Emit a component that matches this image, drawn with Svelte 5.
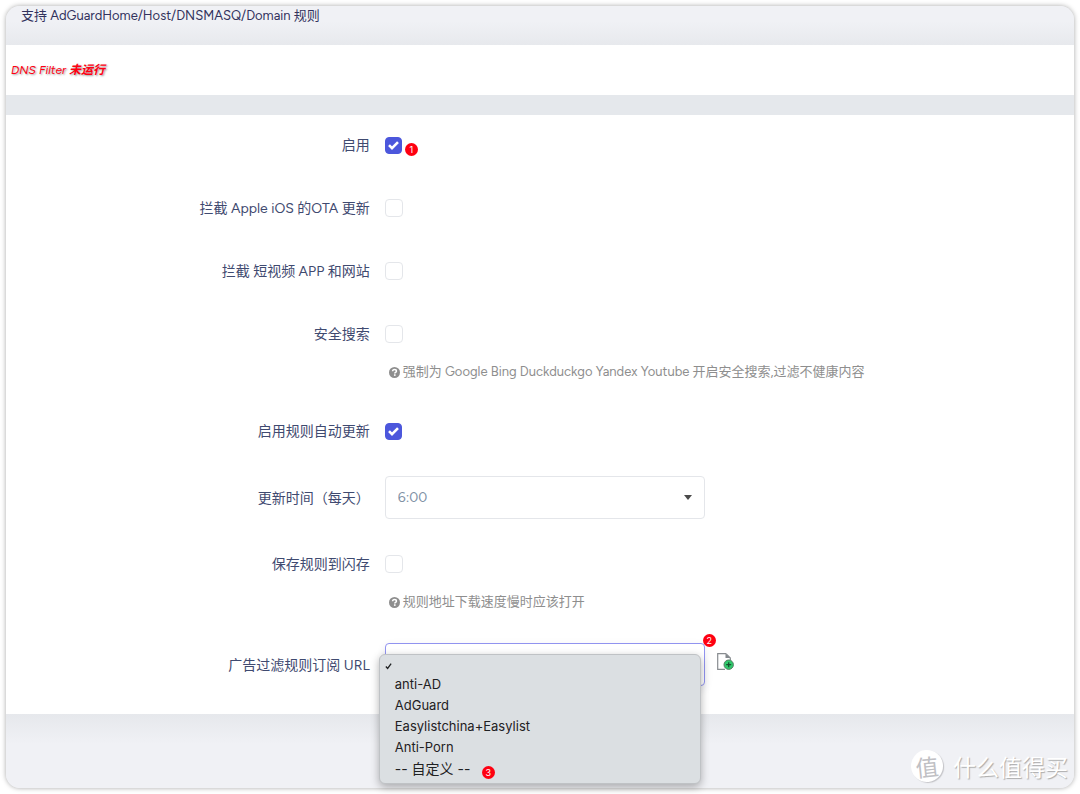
<script>
    let enabled = $state(true);
    let blockOta = $state(false);
    let blockVideo = $state(false);
    let safeSearch = $state(false);
    let autoUpdate = $state(true);
    let saveFlash = $state(false);
    let updateTime = $state("6:00");
    let ruleUrl = $state("");
    let menuOpen = $state(true);

    const hours = Array.from({ length: 24 }, (_, h) => `${h}:00`);

    const sources = ["", "anti-AD", "AdGuard", "Easylistchina+Easylist", "Anti-Porn", "-- 自定义 --"];

    function pick(source) {
        ruleUrl = source;
        menuOpen = false;
    }

    // the custom list replaces the native popup of the select
    function openMenu(e) {
        e.preventDefault();
        menuOpen = !menuOpen;
    }
</script>

{#snippet hint(text)}
    <p class="hint">
        <svg viewBox="0 0 16 16" aria-hidden="true">
            <circle cx="8" cy="8" r="8" fill="currentColor" />
            <path d="M5.2 6.300C5.300 4.500 6.500 3.600 8 3.600s2.800.9 2.800 2.400c0 1.900-2.400 1.900-2.400 3.500" fill="none" stroke="#fff" stroke-width="2.200" />
            <rect x="7.200" y="10.600" width="2.400" height="2.300" fill="#fff" />
        </svg>
        {text}
    </p>
{/snippet}

<div class="window">
    <header>支持 AdGuardHome/Host/DNSMASQ/Domain 规则</header>

    <section class="status"><em>DNS Filter <b>未运行</b></em></section>

    <form>
        <div class="row">
            <label for="enabled">启用</label>
            <div class="field">
                <input id="enabled" type="checkbox" bind:checked={enabled} />
                <span class="badge one">1</span>
            </div>
        </div>
        <div class="row">
            <label for="ota">拦截 Apple iOS 的OTA 更新</label>
            <div class="field"><input id="ota" type="checkbox" bind:checked={blockOta} /></div>
        </div>
        <div class="row">
            <label for="video">拦截 短视频 APP 和网站</label>
            <div class="field"><input id="video" type="checkbox" bind:checked={blockVideo} /></div>
        </div>
        <div class="row">
            <label for="safe">安全搜索</label>
            <div class="field"><input id="safe" type="checkbox" bind:checked={safeSearch} /></div>
            {@render hint("强制为 Google Bing Duckduckgo Yandex Youtube 开启安全搜索,过滤不健康内容")}
        </div>
        <div class="row">
            <label for="auto">启用规则自动更新</label>
            <div class="field"><input id="auto" type="checkbox" bind:checked={autoUpdate} /></div>
        </div>
        <div class="row">
            <label for="time">更新时间（每天）</label>
            <div class="field">
                <div class="select">
                    <select id="time" bind:value={updateTime}>
                        {#each hours as hour (hour)}
                            <option>{hour}</option>
                        {/each}
                    </select>
                    <span class="caret"></span>
                </div>
            </div>
        </div>
        <div class="row">
            <label for="flash">保存规则到闪存</label>
            <div class="field"><input id="flash" type="checkbox" bind:checked={saveFlash} /></div>
            {@render hint("规则地址下载速度慢时应该打开")}
        </div>
        <div class="row">
            <label for="url">广告过滤规则订阅 URL</label>
            <div class="field">
                <div class="select">
                    <select id="url" class="focused" bind:value={ruleUrl} onmousedown={openMenu}>
                        {#each sources as source (source)}
                            <option value={source}>{source}</option>
                        {/each}
                    </select>
                    <span class="badge two">2</span>
                    {#if menuOpen}
                        <div class="menu" role="listbox" aria-label="广告过滤规则订阅 URL">
                            {#each sources as source (source)}
                                <button type="button" role="option" aria-selected={source === ruleUrl} aria-label={source || "空"} onclick={() => pick(source)}>
                                    <span class="tick">
                                        {#if source === ruleUrl}
                                            <svg viewBox="0 0 8 8" aria-hidden="true"><path d="M1 4.600 3 6.800 7 1.200" /></svg>
                                        {/if}
                                    </span>
                                    {source}
                                </button>
                            {/each}
                            <span class="badge three">3</span>
                        </div>
                    {/if}
                </div>
                <button type="button" class="add" aria-label="添加">
                    <svg viewBox="0 0 17 17" aria-hidden="true">
                        <path d="M9 .7H.7v15.600H8M9 .7l4.300 4.300v2" fill="#fff" stroke="#888c90" stroke-width="1.200" />
                        <path d="M8.500.7V5h4.800z" fill="#84898e" />
                        <circle cx="11.700" cy="11.700" r="4.700" fill="#2fc96b" stroke="#4f7d61" />
                        <path d="M11.700 9.200v5M9.200 11.700h5" stroke="#17512e" stroke-width="1.300" />
                    </svg>
                </button>
            </div>
        </div>
    </form>

    <footer>
        <span class="mark">值</span>
        <span>什么值得买</span>
    </footer>
</div>

<style>
    :global(body) {
        background: #fff;
    }
    .window {
        margin: 6px;
        border-radius: 14px;
        background: #f0f1f5;
        box-shadow: 0 0 5px rgba(0, 0, 0, 0.35);
        color: #32325d;
        font: 14px/20px Figtree, "Open Sans", "Noto Sans CJK SC", sans-serif;
    }
    header {
        padding: 0 15px 19px;
        border-radius: 14px 14px 0 0;
        background: linear-gradient(#f0f1f5 40%, #e7e9ed);
        font-size: 13px;
    }
    .status {
        padding: 15px 5px;
        background: #fff;
        border-bottom: 20px solid #e5e8ec;
        color: #ff0012;
        font-size: 12px;
        text-shadow: 1px 1px 2px rgba(0, 0, 0, 0.4);
    }
    form {
        display: flex;
        flex-direction: column;
        gap: 23px;
        padding: 10px 0 26px 1px;
        background: #fff;
    }
    .row {
        display: grid;
        grid-template-columns: 34% 1fr;
        column-gap: 15px;
        align-items: center;
    }
    label {
        padding-top: 2px;
        color: #3f4a70;
        text-align: right;
    }
    .field {
        display: flex;
        align-items: center;
        min-height: 40px;
    }
    input {
        appearance: none;
        width: 18px;
        height: 18px;
        margin: 0;
        border: 1px solid #e4e6ea;
        border-radius: 4px;
        background: #fff;
    }
    input:checked {
        width: 17px;
        height: 17px;
        border-color: #4c57dc;
        background: #4c57dc url("data:image/svg+xml,%3Csvg xmlns='http://www.w3.org/2000/svg' viewBox='0 0 15 15'%3E%3Cpath d='M3 7.200l3 3 6-6' fill='none' stroke='white' stroke-width='2.600'/%3E%3C/svg%3E") center / 15px;
    }
    .hint {
        grid-column: 2;
        display: flex;
        align-items: center;
        gap: 3px;
        margin: 0;
        padding: 8px 4px 6px;
        color: #8e8e8e;
        font-size: 13px;
    }
    .hint svg {
        width: 11px;
        height: 11px;
        flex-shrink: 0;
    }
    .select {
        position: relative;
        width: 320px;
        margin: 2px 0;
    }
    select {
        appearance: none;
        display: block;
        width: 100%;
        height: 43px;
        padding: 0 12px;
        border: 1px solid #e4e6ea;
        border-radius: 4px;
        background: #fff;
        color: #8091a5;
        font: inherit;
    }
    select.focused {
        border-color: #9193f0;
        box-shadow: 0 3px 9px rgba(50, 50, 93, 0.1);
    }
    .caret {
        position: absolute;
        top: 19px;
        right: 13px;
        border: 4px solid transparent;
        border-top: 5px solid #4a4a4a;
        border-bottom: 0;
        pointer-events: none;
    }
    .badge {
        width: 13px;
        height: 13px;
        border-radius: 50%;
        background: #fe0011;
        color: #fff;
        font: 9px/13px Inter, sans-serif;
        text-align: center;
    }
    .one {
        margin: 9px 0 0 3px;
    }
    .two {
        position: absolute;
        top: -9px;
        right: -11px;
    }
    .three {
        position: absolute;
        bottom: 4px;
        left: 102px;
    }
    .menu {
        position: absolute;
        z-index: 1;
        top: 11px;
        left: -6px;
        right: 4px;
        padding: 2px 0 4px;
        border: 1px solid #bfc2c5;
        border-radius: 6px;
        background: #dbdfe2;
        box-shadow: 0 3px 9px rgba(0, 0, 0, 0.3);
    }
    .menu button {
        display: flex;
        align-items: center;
        width: 100%;
        height: 21px;
        padding: 0 5px;
        border: 0;
        background: none;
        color: #1f2123;
        font: 13px/21px Inter, "Noto Sans CJK SC", sans-serif;
    }
    .menu button:last-of-type {
        font-size: 14px;
    }
    .menu button:first-child {
        height: 17px;
    }
    .tick {
        display: flex;
        width: 10px;
    }
    .tick svg {
        width: 7px;
        height: 8px;
        fill: none;
        stroke: #1f2123;
        stroke-width: 1.500;
    }
    .add {
        display: flex;
        margin: 0 0 6px 12px;
        padding: 0;
        border: 0;
        background: none;
    }
    .add svg {
        width: 17px;
        height: 17px;
    }
    footer {
        display: flex;
        align-items: center;
        justify-content: flex-end;
        gap: 10px;
        padding: 36px 6px 6px;
        border-radius: 0 0 14px 14px;
        background: linear-gradient(#e6e8ec, #f0f1f5 30px);
        color: #fff;
        font: 23px/32px "Noto Sans CJK SC", sans-serif;
        text-shadow: 1px 1px 1px #aaa;
    }
    .mark {
        width: 32px;
        height: 32px;
        border-radius: 50%;
        background: #fff;
        box-shadow: 1px 1px 1px #c4c4c8;
        color: #bfc0c4;
        text-align: center;
        text-shadow: none;
        transform: rotate(-6deg);
    }
</style>
